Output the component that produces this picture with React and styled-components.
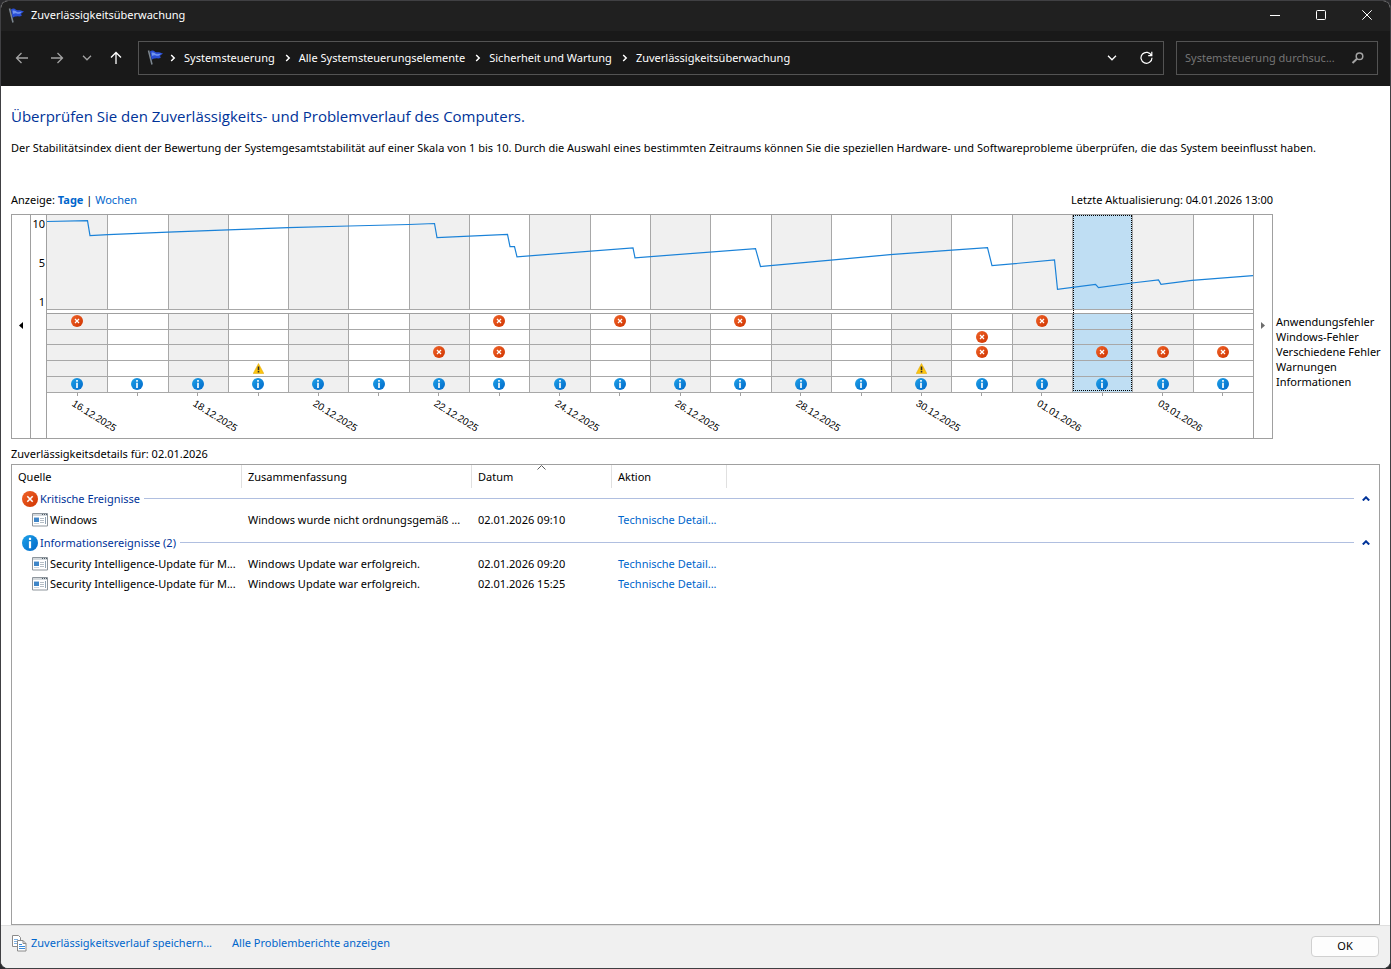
import React, { useState } from 'react';
import styled, { createGlobalStyle, css } from 'styled-components';

const GlobalStyle = createGlobalStyle`
  * {
    box-sizing: border-box;
  }

  body {
    margin: 0;
    background: #2b2b2e;
    font-family: 'Noto Sans', 'Open Sans', sans-serif;
    font-size: 11px;
    line-height: 16px;
    color: #000000;
  }

  button, input {
    font: inherit;
    color: inherit;
  }
`;

const Window = styled.div`
  display: flex;
  flex-direction: column;
  min-height: 100vh;
  border: 1px solid #404043;
  border-radius: 8px;
  background: #ffffff;
  overflow: hidden;
`;

const TitleBar = styled.header`
  display: flex;
  align-items: center;
  height: 30px;
  padding: 0 0 2px 7px;
  background: #202020;
  color: #ffffff;
`;

const Title = styled.span`
  flex: 1;
  padding-left: 6px;
`;

const CaptionButton = styled.button`
  display: flex;
  align-items: center;
  justify-content: center;
  width: 46px;
  height: 28px;
  padding: 0;
  border: 0;
  background: none;
`;

const Toolbar = styled.nav`
  display: flex;
  align-items: center;
  height: 55px;
  padding: 0 12px 2px;
  background: #191919;
  color: #ffffff;
`;

const NavButtons = styled.div`
  display: flex;
  align-items: center;
  width: 125px;
  padding-left: 2px;
`;

const NavButton = styled.button`
  display: flex;
  align-items: center;
  justify-content: flex-start;
  width: ${props => props.$width}px;
  padding: 0;
  border: 0;
  background: none;
  color: ${props => (props.$dim ? '#a3a3a3' : '#ffffff')};
`;

const AddressBar = styled.div`
  display: flex;
  flex: 1;
  align-items: center;
  height: 34px;
  padding: 0 0 0 8px;
  border: 1px solid #535353;
`;

const Crumbs = styled.ol`
  display: flex;
  flex: 1;
  align-items: center;
  margin: 0;
  padding: 0;
  list-style: none;
`;

const Crumb = styled.li`
  display: flex;
  align-items: center;

  svg {
    margin: 0 8px 0 10px;
  }

  &:first-child svg {
    margin-left: 6px;
  }

  a {
    color: #ffffff;
    text-decoration: none;
  }
`;

const AddressButton = styled.button`
  display: flex;
  align-items: center;
  justify-content: center;
  width: 34px;
  height: 32px;
  padding: 0;
  border: 0;
  background: none;
`;

const SearchBox = styled.label`
  display: flex;
  align-items: center;
  width: 202px;
  height: 34px;
  margin-left: 12px;
  padding: 0 12px 0 8px;
  border: 1px solid #535353;
  color: #a3a3a3;
`;

const SearchInput = styled.input`
  flex: 1;
  min-width: 0;
  padding: 0;
  border: 0;
  outline: 0;
  background: none;

  &::placeholder {
    color: #757575;
  }
`;

const Content = styled.main`
  display: flex;
  flex: 1;
  flex-direction: column;
  padding: 19px 10px 0;
`;

const Heading = styled.h1`
  margin: 0;
  font-family: 'Open Sans', sans-serif;
  font-size: 15px;
  font-weight: 400;
  line-height: 22px;
  color: #003399;
`;

const Description = styled.p`
  margin: 13px 0 36px;
`;

const Link = styled.a`
  color: #0066cc;
  text-decoration: none;
  font-weight: ${props => (props.$active ? 700 : 400)};
`;

const ChartSection = styled.section`
  display: grid;
  grid-template-columns: 1fr 107px;
`;

const ChartHeader = styled.div`
  display: flex;
  justify-content: space-between;
  padding-bottom: 6px;
`;

const Chart = styled.div`
  display: flex;
  grid-row: 2;
  height: 225px;
  border: 1px solid #a0a0a0;
`;

const ScrollButton = styled.button`
  display: flex;
  align-items: center;
  justify-content: center;
  width: 18px;
  padding: 0 0 2px;
  border: 0;
  background: none;
`;

const Axis = styled.div`
  display: flex;
  flex-direction: column;
  align-items: flex-end;
  width: 17px;
  border: solid #a0a0a0;
  border-width: 0 1px;
  padding-right: 1px;
`;

const AxisLabels = styled.div`
  display: flex;
  flex-direction: column;
  justify-content: space-between;
  height: 95px;
  padding-top: 1px;
  text-align: right;
`;

const Plot = styled.div`
  position: relative;
  display: grid;
  flex: 1;
  grid-template-columns: repeat(20, 1fr);
  border-right: 1px solid #a0a0a0;
`;

const GraphCell = styled.span`
  height: 95px;
  margin-bottom: 3px;
  border: solid var(--line);
  border-width: 0 0 1px 1px;
  background: var(--cell);
`;

const EventCells = styled.span`
  display: grid;
  grid-template-rows: 16px 15px 16px 16px 16px;
  border-top: 1px solid #a0a0a0;
`;

const EventCell = styled.span`
  display: flex;
  align-items: flex-start;
  justify-content: center;
  padding: 1px 1px 0 0;
  border: solid var(--line);
  border-width: 0 0 1px 1px;
  background: var(--cell);
`;

const Day = styled.button`
  position: relative;
  display: flex;
  flex-direction: column;
  min-width: 0;
  padding: 0;
  border: 0;
  background: none;
  text-align: left;
  --cell: ${props => (props.$shaded ? '#f0f0f0' : '#ffffff')};
  --line: #a8a8a8;

  &:first-child ${GraphCell}, &:first-child ${EventCell} {
    border-left: 0;
  }

  ${props => props.$selected && css`
    --cell: #bfdef3;

    &::after {
      content: '';
      position: absolute;
      inset: 0 0 47px 1px;
      border: 1px dotted #000000;
    }
  `}
`;

const Tick = styled.span`
  align-self: center;
  width: 1px;
  height: 3px;
  background: #a0a0a0;
`;

const DateLabel = styled.time`
  align-self: center;
  width: 0;
  white-space: nowrap;
  font-family: 'Liberation Sans', sans-serif;
  font-size: 10px;
  transform: rotate(32deg);
  transform-origin: 0 0;
`;

const StabilityLine = styled.svg`
  position: absolute;
  top: 0;
  left: 0;
  width: 100%;
  height: 95px;
  pointer-events: none;
`;

const Legend = styled.ul`
  grid-row: 2;
  margin: 0;
  padding: 100px 0 0 3px;
  list-style: none;
  line-height: 15px;
  white-space: nowrap;
`;

const DetailsTitle = styled.h2`
  margin: 7px 0 2px;
  font-size: 11px;
  font-weight: 400;
`;

const DetailsPanel = styled.section`
  flex: 1;
  border: 1px solid #a0a0a0;
`;

const DetailsTable = styled.table`
  width: 100%;
  table-layout: fixed;
  border-collapse: separate;
  border-spacing: 0;
`;

const HeaderCell = styled.th`
  position: relative;
  width: ${props => props.$width};
  height: 23px;
  padding: 0 6px;
  border-right: ${props => (props.$width ? '1px solid #e0e0e0' : '0')};
  font-weight: 400;
  text-align: left;
`;

const SortMark = styled.span`
  position: absolute;
  top: 0;
  left: 0;
  right: 0;
  display: flex;
  justify-content: center;
`;

const GroupCell = styled.th`
  height: ${props => (props.$first ? '22px' : '24px')};
  padding: ${props => (props.$first ? '0' : '2px')} 9px 0 10px;
  font-weight: 400;
  color: #003399;
`;

const GroupTitle = styled.div`
  display: flex;
  align-items: center;
  gap: 2px;
`;

const GroupRule = styled.span`
  flex: 1;
  height: 1px;
  margin: 0 6px 2px 2px;
  background: #b0bfe0;
`;

const GroupToggle = styled.button`
  display: flex;
  padding: 0 0 1px;
  border: 0;
  background: none;
`;

const Cell = styled.td`
  height: 20px;
  padding: 0 4px 0 6px;
  white-space: nowrap;
`;

const SourceCell = styled(Cell)`
  padding: 0 0 0 20px;
`;

const Source = styled.span`
  display: flex;
  align-items: center;
  gap: 2px;

  svg {
    flex: none;
  }
`;

const Footer = styled.footer`
  display: flex;
  align-items: center;
  gap: 20px;
  height: 43px;
  padding: 0 11px 8px;
  border-top: 1px solid #dfdfdf;
  background: #f0f0f0;
`;

const SaveLink = styled(Link)`
  display: flex;
  align-items: center;
  gap: 4px;
`;

const OkButton = styled.button`
  width: 68px;
  height: 21px;
  margin: 6px 0 0 auto;
  padding: 0;
  border: 1px solid #d0d0d0;
  border-radius: 4px;
  background: #fdfdfd;
`;

const FlagIcon = () => (
  <svg width="17" height="17" viewBox="0 0 17 17" aria-hidden="true">
    <path d="M1.500 1.500 5 15.500" stroke="#7d8790" strokeWidth="1.500" fill="none" />
    <path d="M3 2.500C5 1 6.500 1.500 8 2.700c1.500 1 2.500.3 4 .6l4 1.200-3 2.200.8 2c-2 1.300-3.800.5-5.300.700S5.500 9.500 4.700 11z" fill="#2a4fd6" />
    <path d="M4.500 3.800C7 2.500 8 5 10 5.200c1.500.1 2.500-.6 4-.4L12 6.500c-2 .8-3.500-.3-4.500-.3S6 6.500 5.200 7z" fill="#7395f0" />
  </svg>
);

const Arrow = ({ turn = 0 }) => (
  <svg width="14" height="14" viewBox="0 0 14 14" fill="none" stroke="currentColor" strokeWidth="1.300" aria-hidden="true">
    <path d="M13 7H1.500M6.500 2l-5 5 5 5" transform={`rotate(${turn} 7 7)`} />
  </svg>
);

const Chevron = () => (
  <svg width="10" height="6" viewBox="0 0 10 6" fill="none" stroke="currentColor" strokeWidth="1.300" aria-hidden="true">
    <path d="M1 .8 5 4.800 9 .8" />
  </svg>
);

const CrumbMark = () => (
  <svg width="6" height="8" viewBox="0 0 6 8" fill="none" stroke="#fff" strokeWidth="1.500" aria-hidden="true">
    <path d="m1.200 1 3 3-3 3" />
  </svg>
);

const ErrorIcon = ({ size = 12 }) => (
  <svg width={size} height={size} viewBox="0 0 16 16" aria-hidden="true">
    <defs>
      <linearGradient id="errorFill" x1="0" y1="0" x2="1" y2="1">
        <stop offset="0" stopColor="#f0642a" />
        <stop offset="1" stopColor="#cf3400" />
      </linearGradient>
    </defs>
    <circle cx="8" cy="8" r="8" fill="url(#errorFill)" />
    <path d="m5.300 5.300 5.400 5.400M10.700 5.300l-5.400 5.400" stroke="#fff" strokeWidth="1.600" />
  </svg>
);

const InfoIcon = ({ size = 12 }) => (
  <svg width={size} height={size} viewBox="0 0 16 16" aria-hidden="true">
    <defs>
      <linearGradient id="infoFill" x1="0" y1="0" x2="1" y2="1">
        <stop offset="0" stopColor="#1fa2e8" />
        <stop offset="1" stopColor="#0068c9" />
      </linearGradient>
    </defs>
    <circle cx="8" cy="8" r="8" fill="url(#infoFill)" />
    <path d="M6.900 2.800h2.200V5H6.900zM6.900 6.200h2.200v7H6.900z" fill="#fff" />
  </svg>
);

const WarningIcon = () => (
  <svg width="11" height="12" viewBox="0 0 11 12" aria-hidden="true">
    <path d="M5.500 1.500 10.800 11.500H.2z" fill="#fcc40f" stroke="#e0a800" strokeWidth=".5" />
    <path d="M4.700 4.600h1.600v3.600H4.700zM4.700 9h1.600v1.500H4.700z" fill="#2b2b2b" />
  </svg>
);

const ProgramIcon = () => (
  <svg width="16" height="14" viewBox="0 0 16 14" aria-hidden="true">
    <path d="M.5.500h15v12.500H.5z" fill="#fff" stroke="#8d959c" />
    <path d="M1 1h14v2H1z" fill="#d3d8dc" />
    <path d="M10 1h1v1h-1zM12 1h1v1h-1zM14 1h1v1h-1z" fill="#4f5b66" />
    <path d="M2 4h5v1H2z" fill="#a9c9e8" />
    <path d="M2 5h5v4H2z" fill="#3f86c8" />
    <path d="M2 10h5v1H2z" fill="#c9d3dc" />
    <path d="M8 5.500h4M8 7.500h4M8 9.500h4" stroke="#b4bdc5" />
    <path d="M13 4h1v7h-1z" fill="#8fa3b5" />
  </svg>
);

const CopyIcon = () => (
  <svg width="15" height="17" viewBox="0 0 15 17" aria-hidden="true">
    <path d="M.5.500h6l2 2v9h-8z" fill="#fff" stroke="#8a8a8a" />
    <path d="M2 4.500h4M2 6.500h3M2 8.500h3" stroke="#7fb0e0" />
    <path d="M5.500 5.500h5.500l3 3v7.500h-8.500z" fill="#fff" stroke="#8a8a8a" />
    <path d="M11 5.500v3h3" fill="none" stroke="#8a8a8a" />
    <path d="M7 9.500h3M7 11.500h6M7 13.500h6" stroke="#3b8ad9" />
  </svg>
);

// One entry per day column: the events are the rows that hold an icon
const days = [
  { date: '16.12.2025', events: ['app'] },
  { date: '17.12.2025', events: [] },
  { date: '18.12.2025', events: [] },
  { date: '19.12.2025', events: ['warning'] },
  { date: '20.12.2025', events: [] },
  { date: '21.12.2025', events: [] },
  { date: '22.12.2025', events: ['misc'] },
  { date: '23.12.2025', events: ['app', 'misc'] },
  { date: '24.12.2025', events: [] },
  { date: '25.12.2025', events: ['app'] },
  { date: '26.12.2025', events: [] },
  { date: '27.12.2025', events: ['app'] },
  { date: '28.12.2025', events: [] },
  { date: '29.12.2025', events: [] },
  { date: '30.12.2025', events: ['warning'] },
  { date: '31.12.2025', events: ['windows', 'misc'] },
  { date: '01.01.2026', events: ['app'] },
  { date: '02.01.2026', events: ['misc'] },
  { date: '03.01.2026', events: ['misc'] },
  { date: '04.01.2026', events: ['misc'] },
];

const rows = [
  { key: 'app', label: 'Anwendungsfehler', Icon: ErrorIcon },
  { key: 'windows', label: 'Windows-Fehler', Icon: ErrorIcon },
  { key: 'misc', label: 'Verschiedene Fehler', Icon: ErrorIcon },
  { key: 'warning', label: 'Warnungen', Icon: WarningIcon },
  { key: 'info', label: 'Informationen', Icon: InfoIcon },
];

const stability = [
  [0, 6.5], [40.5, 5.700], [43, 20.7], [61, 19.7], [121, 17.2], [181, 14.8], [241, 12.7],
  [302, 11], [362, 9.5], [387.5, 8.5], [390, 22.7], [460.5, 19.3], [463, 31.7], [467.5, 31.7],
  [470, 41.8], [586, 32.8], [588, 42.8], [708.5, 33.6], [713.5, 51.5], [784, 45.200],
  [843, 39.7], [905, 35.2], [940.5, 32.7], [945, 50.700], [1007.5, 45], [1010.5, 74.300],
  [1048.5, 69.3], [1051.5, 72.7], [1085, 68], [1111.5, 65], [1114, 69.3], [1145, 65.300], [1206, 60.7],
];

const crumbs = ['Systemsteuerung', 'Alle Systemsteuerungselemente', 'Sicherheit und Wartung', 'Zuverlässigkeitsüberwachung'];

const groups = [
  {
    title: 'Kritische Ereignisse',
    Icon: ErrorIcon,
    items: [
      { source: 'Windows', summary: 'Windows wurde nicht ordnungsgemäß ...', date: '02.01.2026 09:10' },
    ],
  },
  {
    title: 'Informationsereignisse (2)',
    Icon: InfoIcon,
    items: [
      { source: 'Security Intelligence-Update für M...', summary: 'Windows Update war erfolgreich.', date: '02.01.2026 09:20' },
      { source: 'Security Intelligence-Update für M...', summary: 'Windows Update war erfolgreich.', date: '02.01.2026 15:25' },
    ],
  },
];

const StabilityChart = ({ selected, onSelect }) => (
  <Chart>
    <ScrollButton aria-label="Zurück">
      <svg width="5" height="7" viewBox="0 0 5 7"><path d="M4 0v7L0 3.500z" fill="#000" /></svg>
    </ScrollButton>
    <Axis>
      <AxisLabels>
        <span>10</span>
        <span>5</span>
        <span>1</span>
      </AxisLabels>
    </Axis>
    <Plot>
      {days.map((day, index) => (
        <Day
          key={day.date}
          aria-label={day.date}
          $shaded={index % 2 === 0}
          $selected={day.date === selected}
          onClick={() => onSelect(day.date)}
        >
          <GraphCell />
          <EventCells>
            {rows.map(({ key, Icon }) => (
              <EventCell key={key}>
                {(key === 'info' || day.events.includes(key)) && <Icon />}
              </EventCell>
            ))}
          </EventCells>
          <Tick />
          {index % 2 === 0 && <DateLabel>{day.date}</DateLabel>}
        </Day>
      ))}
      <StabilityLine viewBox="0 0 1206 95" preserveAspectRatio="none" aria-hidden="true">
        <polyline
          points={stability.map(point => point.join(',')).join(' ')}
          fill="none"
          stroke="#1a82d8"
          strokeWidth="1.200"
          vectorEffect="non-scaling-stroke"
        />
      </StabilityLine>
    </Plot>
    <ScrollButton aria-label="Weiter">
      <svg width="4" height="7" viewBox="0 0 4 7"><path d="M0 0v7l4-3.500z" fill="#6d6d6d" /></svg>
    </ScrollButton>
  </Chart>
);

const EventDetails = () => (
  <DetailsPanel>
    <DetailsTable>
      <thead>
        <tr>
          <HeaderCell $width="230px">Quelle</HeaderCell>
          <HeaderCell $width="230px">Zusammenfassung</HeaderCell>
          <HeaderCell $width="140px">
            Datum
            <SortMark>
              <svg width="9" height="5" viewBox="0 0 9 5" fill="none" stroke="#5a5a5a"><path d="M.5 4.500l4-4 4 4" /></svg>
            </SortMark>
          </HeaderCell>
          <HeaderCell $width="115px">Aktion</HeaderCell>
          <HeaderCell as="td" />
        </tr>
      </thead>
      {groups.map(({ title, Icon, items }, index) => (
        <tbody key={title}>
          <tr>
            <GroupCell colSpan={5} $first={index === 0}>
              <GroupTitle>
                <Icon size={16} />
                {title}
                <GroupRule />
                <GroupToggle aria-label={title}>
                  <svg width="8" height="5" viewBox="0 0 8 5" fill="none" stroke="#003399" strokeWidth="2"><path d="M.8 4.500 4 1.300l3.200 3.200" /></svg>
                </GroupToggle>
              </GroupTitle>
            </GroupCell>
          </tr>
          {items.map(item => (
            <tr key={item.date}>
              <SourceCell>
                <Source>
                  <ProgramIcon />
                  {item.source}
                </Source>
              </SourceCell>
              <Cell>{item.summary}</Cell>
              <Cell>{item.date}</Cell>
              <Cell><Link href="#details">Technische Detail...</Link></Cell>
              <Cell />
            </tr>
          ))}
        </tbody>
      ))}
    </DetailsTable>
  </DetailsPanel>
);

const App = () => {
  const [selected, setSelected] = useState('02.01.2026');

  return (
    <>
      <GlobalStyle />
      <Window>
        <TitleBar>
          <FlagIcon />
          <Title>Zuverlässigkeitsüberwachung</Title>
          <CaptionButton aria-label="Minimieren">
            <svg width="10" height="10" viewBox="0 0 10 10" stroke="#fff"><path d="M0 5.500h10" /></svg>
          </CaptionButton>
          <CaptionButton aria-label="Maximieren">
            <svg width="10" height="10" viewBox="0 0 10 10" fill="none" stroke="#fff"><rect x=".5" y=".5" width="9" height="9" rx="1" /></svg>
          </CaptionButton>
          <CaptionButton aria-label="Schließen">
            <svg width="10" height="10" viewBox="0 0 10 10" stroke="#fff"><path d="m.3.300 9.400 9.400M9.700.300.3 9.700" /></svg>
          </CaptionButton>
        </TitleBar>

        <Toolbar>
          <NavButtons>
            <NavButton aria-label="Zurück" $width={35} $dim><Arrow /></NavButton>
            <NavButton aria-label="Vorwärts" $width={32} $dim><Arrow turn={180} /></NavButton>
            <NavButton aria-label="Letzte Orte" $width={27} $dim><Chevron /></NavButton>
            <NavButton aria-label="Nach oben" $width={20}><Arrow turn={90} /></NavButton>
          </NavButtons>
          <AddressBar>
            <FlagIcon />
            <Crumbs>
              {crumbs.map(crumb => (
                <Crumb key={crumb}>
                  <CrumbMark />
                  <a href="#crumb">{crumb}</a>
                </Crumb>
              ))}
            </Crumbs>
            <AddressButton aria-label="Vorherige Orte"><Chevron /></AddressButton>
            <AddressButton aria-label="Aktualisieren">
              <svg width="13" height="13" viewBox="0 0 13 13" fill="none" stroke="#fff" strokeWidth="1.200">
                <path d="M11.500 4.500a5.500 5.500 0 1 0 .5 2.300M11.800.8v3.800H8.200" />
              </svg>
            </AddressButton>
          </AddressBar>
          <SearchBox>
            <SearchInput type="search" aria-label="Suche" placeholder="Systemsteuerung durchsuc..." />
            <svg width="14" height="12" viewBox="0 0 14 12" fill="none" stroke="currentColor" strokeWidth="1.500" aria-hidden="true">
              <circle cx="8.500" cy="4.300" r="3.300" />
              <path d="M6 6.800 1.500 11" strokeWidth="2" />
            </svg>
          </SearchBox>
        </Toolbar>

        <Content>
          <Heading>Überprüfen Sie den Zuverlässigkeits- und Problemverlauf des Computers.</Heading>
          <Description>
            Der Stabilitätsindex dient der Bewertung der Systemgesamtstabilität auf einer Skala von 1 bis 10. Durch die Auswahl eines bestimmten Zeitraums können Sie die speziellen Hardware- und Softwareprobleme überprüfen, die das System beeinflusst haben.
          </Description>

          <ChartSection>
            <ChartHeader>
              <span>
                Anzeige: <Link href="#tage" $active>Tage</Link> | <Link href="#wochen">Wochen</Link>
              </span>
              <span>Letzte Aktualisierung: 04.01.2026 13:00</span>
            </ChartHeader>
            <StabilityChart selected={selected} onSelect={setSelected} />
            <Legend>
              {rows.map(row => <li key={row.key}>{row.label}</li>)}
            </Legend>
          </ChartSection>

          <DetailsTitle>Zuverlässigkeitsdetails für: {selected}</DetailsTitle>
          <EventDetails />
        </Content>

        <Footer>
          <SaveLink href="#speichern">
            <CopyIcon />
            Zuverlässigkeitsverlauf speichern...
          </SaveLink>
          <Link href="#berichte">Alle Problemberichte anzeigen</Link>
          <OkButton>OK</OkButton>
        </Footer>
      </Window>
    </>
  );
};

export default App;
